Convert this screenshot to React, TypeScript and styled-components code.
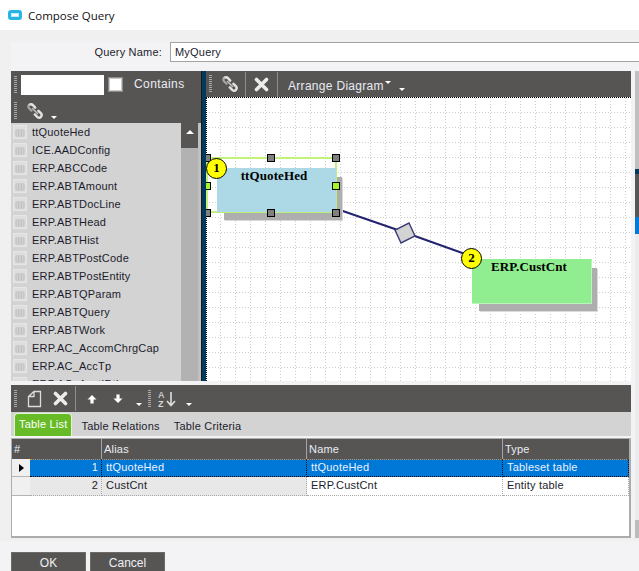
import React from "react";
import styled, { createGlobalStyle } from "styled-components";

const Global = createGlobalStyle`
  html, body { margin: 0; padding: 0; background: #fff; }
  * { box-sizing: border-box; }
`;

const DARK = "#575553";

const Page = styled.div`
  width: 639px;
  height: 571px;
  overflow: hidden;
  display: flex;
  flex-direction: column;
  background: #f0f0f0;
  font-family: "Liberation Sans", Arial, sans-serif;
  font-size: 11px;
  letter-spacing: 0.2px;
  color: #1c1c2c;
`;
const TitleBar = styled.div`
  height: 30px;
  flex: none;
  background: #fff;
  display: flex;
  align-items: center;
  gap: 6px;
  padding-left: 8px;
  font-family: "Open Sans", sans-serif;
  font-size: 11.5px;
  letter-spacing: 0;
  color: #111;
`;
const TitleIcon = styled.span`
  width: 14px;
  height: 10px;
  border-radius: 3px;
  background: #fff;
  border: 3px solid #27b4e6;
  box-shadow: inset 0 0 0 1px #bfe9f7;
`;
const Work = styled.div`
  flex: none;
  height: 499px;
  padding: 12px 0 0 11px;
`;
const NameRow = styled.div`
  height: 29px;
  display: flex;
  background: #f3f3f5;
  justify-content: flex-end;
  align-items: flex-start;
  gap: 8px;
`;
const NameLabel = styled.label`
  line-height: 20px;
`;
const NameInput = styled.div`
  width: 469px;
  height: 20px;
  background: #fff;
  border: 1px solid #a3a3a3;
  border-right: 0;
  padding-left: 4px;
  line-height: 18px;
`;
const Content = styled.div`
  display: flex;
  gap: 4px;
  background: #f3f3f5;
`;
const Column = styled.div`
  width: 620px;
  display: flex;
  flex-direction: column;
  gap: 4px;
`;
const Split = styled.div`
  height: 310px;
  display: flex;
`;
const ListPanel = styled.div`
  width: 190px;
  display: flex;
  flex-direction: column;
  overflow: hidden;
`;
const Bar = styled.div<{ $h: number; $pad?: number }>`
  height: ${(p) => p.$h}px;
  flex: none;
  background: ${DARK};
  display: flex;
  align-items: center;
  padding-left: ${(p) => p.$pad ?? 3}px;
  color: #fff;
`;
const Grip = styled.span<{ $l?: number }>`
  width: 3px;
  height: 18px;
  flex: none;
  margin-left: ${(p) => p.$l ?? 0}px;
  background: repeating-linear-gradient(to bottom, #a9a9a7 0 1px, transparent 1px 2px);
`;
const SearchBox = styled.div`
  width: 83px;
  height: 20px;
  margin-left: 4px;
  background: #fff;
`;
const Check = styled.span`
  width: 13px;
  height: 13px;
  margin-left: 5px;
  background: #fff;
  border: 1px solid #c9c9c9;
  box-shadow: 0 0 0 1px #8d8c8a;
`;
const ContainsLabel = styled.span`
  margin: -1px 0 0 12px;
  color: #e9edf5;
  font-size: 12px;
  letter-spacing: 0.4px;
`;
const Caret = styled.span<{ $x?: number; $y?: number }>`
  width: 0;
  height: 0;
  flex: none;
  margin-left: ${(p) => p.$x ?? 0}px;
  margin-top: ${(p) => p.$y ?? 0}px;
  border: 3px solid transparent;
  border-bottom: 0;
  border-top-color: #fff;
`;
const ListBody = styled.div`
  flex: 1;
  display: flex;
  background: #c0c0c0;
  overflow: hidden;
  padding-right: 2px;
`;
const Items = styled.div`
  width: 170px;
  height: 258px;
  padding: 0 0 0 2px;
  background: #d3d3d3;
  overflow: hidden;
`;
const Item = styled.div`
  height: 18px;
  display: flex;
  align-items: center;
  gap: 5px;
  white-space: nowrap;
`;
const ScrollTrack = styled.div`
  width: 17px;
  background: #b2b2b2;
`;
const ScrollUp = styled.div`
  height: 25px;
  background: ${DARK};
  display: flex;
  justify-content: center;
  padding-top: 7px;
`;
const UpTri = styled.span`
  width: 0;
  height: 0;
  border: 4px solid transparent;
  border-top: 0;
  border-bottom: 4px solid #fff;
`;
const Splitter = styled.div`
  width: 5px;
  flex: none;
  background: #003a5c;
  border-left: 1px solid #1a1a1a;
`;
const Diagram = styled.div`
  flex: 1;
  display: flex;
  flex-direction: column;
  min-width: 0;
`;
const DiagramBar = styled(Bar)`
  border-bottom: 1px dotted #000;
  background-clip: padding-box;
`;
const Sep = styled.span<{ $l: number; $r: number }>`
  width: 1px;
  height: 25px;
  flex: none;
  margin-left: ${(p) => p.$l}px;
  margin-right: ${(p) => p.$r}px;
  background: #8f8e8c;
`;
const BarIcon = styled.svg<{ $l?: number }>`
  flex: none;
  display: block;
  margin-left: ${(p) => p.$l ?? 0}px;
`;
const MenuLabel = styled.span`
  margin: 3px 0 0 10px;
  color: #e6ebf5;
  font-size: 12px;
  letter-spacing: 0.3px;
`;
const Canvas = styled.div`
  flex: 1;
  position: relative;
  background: #fff;
  overflow: hidden;
`;
const CanvasArt = styled.svg`
  position: absolute;
  inset: 0;
  width: 100%;
  height: 100%;
`;
const Selection = styled.div`
  position: absolute;
  left: 0;
  top: 59px;
  width: 131px;
  height: 56px;
  border: 2px solid #c3f27a;
`;
const Node = styled.div<{ $x: number; $y: number; $bg: string; $edge: string }>`
  position: absolute;
  left: ${(p) => p.$x}px;
  top: ${(p) => p.$y}px;
  width: 120px;
  height: 45px;
  padding: 0 6px 0 0;
  background: ${(p) => p.$bg};
  border: 1px solid ${(p) => p.$edge};
  border-left-color: ${(p) => p.$bg};
  border-top-color: ${(p) => p.$bg};
  box-shadow: 6px 8px 0 -1px #aeaeae, 7px 9px 0 -1px #dadada;
  font-family: "Liberation Serif", "Times New Roman", serif;
  font-weight: bold;
  font-size: 13px;
  letter-spacing: 0.1px;
  line-height: 14px;
  text-align: center;
  color: #000;
`;
const Badge = styled.div<{ $x: number; $y: number }>`
  position: absolute;
  left: ${(p) => p.$x}px;
  top: ${(p) => p.$y}px;
  width: 21px;
  height: 21px;
  border-radius: 50%;
  background: #ffff00;
  border: 1px solid #000;
  font-family: "Liberation Serif", serif;
  font-weight: bold;
  font-size: 13px;
  letter-spacing: 0;
  line-height: 17px;
  text-align: center;
  color: #000;
`;
const Handle = styled.span<{ $x: number; $y: number; $on?: boolean }>`
  position: absolute;
  left: ${(p) => p.$x}px;
  top: ${(p) => p.$y}px;
  width: 8px;
  height: 8px;
  background: ${(p) => (p.$on ? "#a4f52a" : "#808080")};
  border: 1px solid #000;
`;
const Bottom = styled.div`
  height: 153px;
  display: flex;
  flex-direction: column;
`;
const Tabs = styled.div`
  height: 24px;
  flex: none;
  background: #d3d3d3;
  display: flex;
  padding-left: 3px;
  align-items: flex-end;
`;
const Tab = styled.div<{ $active?: boolean }>`
  height: ${(p) => (p.$active ? 23 : 22)}px;
  padding: ${(p) => (p.$active ? "0 4px" : "0 7px")};
  margin-right: ${(p) => (p.$active ? 2 : 0)}px;
  line-height: ${(p) => (p.$active ? 20 : 24)}px;
  background: ${(p) => (p.$active ? "#66bb27" : "transparent")};
  color: ${(p) => (p.$active ? "#fff" : "#1c1c2c")};
  border-radius: 4px 4px 0 0;
  border: ${(p) => (p.$active ? "1px solid #e4f5d4" : "0")};
  border-bottom: 0;
`;
const GridBox = styled.div`
  margin-top: 2px;
  height: 100px;
  background: #fff;
  border: 1px solid #acacac;
  border-width: 1px 2px 2px 1px;
`;
const HeadRow = styled.div`
  height: 20px;
  display: grid;
  grid-template-columns: 90px 205px 196px 126px;
  background: ${DARK};
  color: #e9edf5;
`;
const HeadCell = styled.div`
  padding-left: 2px;
  line-height: 20px;
  border-right: 1px solid #a5a5a5;
  &:last-child { border-right: 0; }
`;
const Row = styled.div<{ $sel?: boolean }>`
  height: ${(p) => (p.$sel ? 18 : 19)}px;
  display: grid;
  grid-template-columns: 18px 72px 205px 196px 126px;
  color: ${(p) => (p.$sel ? "#eaf2ff" : "#1c1c2c")};
`;
const Indicator = styled.div`
  background: #f0f0f0;
  border-bottom: 1px solid #b5b5b5;
  display: flex;
  align-items: center;
  padding-left: 7px;
`;
const RightTri = styled.span`
  width: 0;
  height: 0;
  border: 4px solid transparent;
  border-right: 0;
  border-left: 5px solid #000;
`;
const Cell = styled.div<{ $sel?: boolean; $alt?: boolean; $num?: boolean }>`
  padding: ${(p) => (p.$num ? "0 3px 0 0" : "0 0 0 4px")};
  text-align: ${(p) => (p.$num ? "right" : "left")};
  line-height: ${(p) => (p.$sel ? 14 : 17)}px;
  background: ${(p) => (p.$sel ? "#0078d7" : p.$alt ? "#e8e8e8" : "#fff")};
  border-right: 1px dotted ${(p) => (p.$sel ? "#0a0a0a" : "#a9a9a9")};
  border-bottom: 1px dotted ${(p) => (p.$sel ? "#000" : "#a9a9a9")};
  border-top: ${(p) => (p.$sel ? "1px dotted #e8821e" : "0")};
`;
const Strip = styled.div`
  width: 4px;
  flex: none;
  height: 467px;
  display: flex;
  flex-direction: column;
`;
const StripPart = styled.div<{ $h: number; $bg: string }>`
  height: ${(p) => p.$h}px;
  flex: none;
  background: ${(p) => p.$bg};
`;
const Footer = styled.div`
  margin: 3px 0 0 -11px;
  height: 30px;
  padding: 11px 0 0 11px;
  background: #f3f3f5;
  display: flex;
  gap: 4px;
`;
const Btn = styled.div`
  width: 75px;
  height: 30px;
  background: ${DARK};
  border: 1px solid #6d6b69;
  color: #eef0f5;
  font-size: 12px;
  letter-spacing: 0;
  text-align: center;
  line-height: 20px;
`;

const Link = ({ l }: { l?: number }) => (
  <BarIcon $l={l} width="18" height="18" viewBox="0 0 18 18" fill="none">
    <path d="M3 3.2c1.5-1.4 3-1 4 0l2.2 2.4" stroke="#e4e4e4" strokeWidth="2.4" strokeLinecap="round" />
    <path d="M8.8 12.4l2.4 2.4c1.2 1 2.6 1.2 3.8 0 1-1.3.8-2.6-.2-3.6l-2.4-2.4" stroke="#e4e4e4" strokeWidth="2.4" strokeLinecap="round" />
    <path d="M3 3.2c-1 1.2-.8 2.4.2 3.4l2.4 2.2" stroke="#a8a8a8" strokeWidth="2" strokeLinecap="round" />
    <path d="M6.5 6.5l5 5" stroke="#bdbdbd" strokeWidth="1.6" strokeLinecap="round" />
  </BarIcon>
);
const Cross = ({ l }: { l?: number }) => (
  <BarIcon $l={l} width="15" height="15" viewBox="0 0 15 15">
    <path d="M2.5 2.5l10 10M12.5 2.5l-10 10" stroke="#ececec" strokeWidth="3.6" strokeLinecap="round" />
  </BarIcon>
);
const TableIcon = () => (
  <svg width="14" height="14" viewBox="0 0 14 14" style={{ flex: "none", display: "block" }}>
    <rect x="0.5" y="0.5" width="13" height="13" fill="#dedede" stroke="#e6e6e6" />
    <path d="M3 5h8v6H3zM3 7h8M3 9h8M5.6 5v6M8.3 5v6" fill="#e8e8e8" stroke="#bdbdbd" strokeWidth="1" />
  </svg>
);

const tables = [
  "ttQuoteHed", "ICE.AADConfig", "ERP.ABCCode", "ERP.ABTAmount", "ERP.ABTDocLine", "ERP.ABTHead",
  "ERP.ABTHist", "ERP.ABTPostCode", "ERP.ABTPostEntity", "ERP.ABTQParam", "ERP.ABTQuery", "ERP.ABTWork",
  "ERP.AC_AccomChrgCap", "ERP.AC_AccTp", "ERP.AC_AcctIDtl",
];

const handles: { x: number; y: number; on?: boolean }[] = [
  { x: -3, y: 56 }, { x: 61, y: 56 }, { x: 126, y: 56 },
  { x: -3, y: 84, on: true }, { x: 126, y: 84, on: true },
  { x: -3, y: 111 }, { x: 61, y: 111 }, { x: 126, y: 111 },
];

export default function App() {
  return (
    <Page>
      <Global />
      <TitleBar>
        <TitleIcon />
        Compose Query
      </TitleBar>
      <Work>
        <NameRow>
          <NameLabel>Query Name:</NameLabel>
          <NameInput>MyQuery</NameInput>
        </NameRow>
        <Content>
          <Column>
            <Split>
              <ListPanel>
                <Bar $h={27}>
                  <Grip />
                  <SearchBox />
                  <Check />
                  <ContainsLabel>Contains</ContainsLabel>
                </Bar>
                <Bar $h={25}>
                  <Grip />
                  <Link l={9} />
                  <Caret $x={7} $y={14} />
                </Bar>
                <ListBody>
                  <Items>
                    {tables.map((t) => (
                      <Item key={t}>
                        <TableIcon />
                        {t}
                      </Item>
                    ))}
                  </Items>
                  <ScrollTrack>
                    <ScrollUp>
                      <UpTri />
                    </ScrollUp>
                  </ScrollTrack>
                </ListBody>
              </ListPanel>
              <Splitter />
              <Diagram>
                <DiagramBar $h={27}>
                  <Grip />
                  <Link l={9} />
                  <Sep $l={6} $r={8} />
                  <Cross />
                  <Sep $l={8} $r={0} />
                  <MenuLabel>Arrange Diagram</MenuLabel>
                  <Caret $x={1} $y={-3} />
                  <Caret $x={8} $y={11} />
                </DiagramBar>
                <Canvas>
                  <CanvasArt>
                    <defs>
                      <pattern id="dots" width="15" height="15" patternUnits="userSpaceOnUse">
                        <path d="M14.5 0V15M0 14.5H15" stroke="#cdcdcd" strokeDasharray="1 2" fill="none" />
                      </pattern>
                    </defs>
                    <rect width="100%" height="100%" fill="url(#dots)" />
                    <path d="M0.5 0V283" stroke="#000" strokeDasharray="1 1" />
                    <path d="M131 111L199 134.5L266 158.5" stroke="#22226e" strokeWidth="2" fill="none" />
                    <path d="M203 125L209 138L195 145L189 132Z" fill="#d3d3d3" stroke="#3b3b78" strokeWidth="1.4" />
                  </CanvasArt>
                  <Selection />
                  <Node $x={11} $y={70} $bg="#add8e6" $edge="#b9f07c">ttQuoteHed</Node>
                  <Node $x={266} $y={161} $bg="#90ee90" $edge="#b8f7b8">ERP.CustCnt</Node>
                  {handles.map((h, i) => (
                    <Handle key={i} $x={h.x} $y={h.y} $on={h.on} />
                  ))}
                  <Badge $x={0} $y={60}>1</Badge>
                  <Badge $x={255} $y={150}>2</Badge>
                </Canvas>
              </Diagram>
            </Split>
            <Bottom>
              <Bar $h={27}>
                <Grip />
                <BarIcon $l={10} width="15" height="18" viewBox="0 0 15 18" fill="none">
                  <path d="M1.5 6.5L7 1.5H13.5V16.5H1.5Z M7 1.5V6.5H1.5" stroke="#dcdcdc" strokeWidth="1.3" />
                </BarIcon>
                <Cross l={11} />
                <Sep $l={7} $r={0} />
                <BarIcon $l={11} width="10" height="10" viewBox="0 0 10 10">
                  <path d="M5 1L9.5 5.5H6.6V9.5H3.4V5.5H.5Z" fill="#fff" />
                </BarIcon>
                <BarIcon $l={16} width="10" height="10" viewBox="0 0 10 10">
                  <path d="M5 9L9.5 4.5H6.6V.5H3.4V4.5H.5Z" fill="#fff" />
                </BarIcon>
                <Caret $x={13} $y={12} />
                <Grip $l={6} />
                <BarIcon $l={7} width="20" height="18" viewBox="0 0 20 18">
                  <text x="0" y="8" fontFamily="Liberation Sans" fontWeight="bold" fontSize="9" fill="#c4c4c4">A</text>
                  <text x="0" y="17" fontFamily="Liberation Sans" fontWeight="bold" fontSize="9" fill="#d8d8d8">Z</text>
                  <path d="M13 2V15M9 11L13 15.5L17 11" stroke="#dedede" strokeWidth="1.6" fill="none" />
                </BarIcon>
                <Caret $x={8} $y={12} />
              </Bar>
              <Tabs>
                <Tab $active>Table List</Tab>
                <Tab>Table Relations</Tab>
                <Tab>Table Criteria</Tab>
              </Tabs>
              <GridBox>
                <HeadRow>
                  <HeadCell>#</HeadCell>
                  <HeadCell>Alias</HeadCell>
                  <HeadCell>Name</HeadCell>
                  <HeadCell>Type</HeadCell>
                </HeadRow>
                <Row $sel>
                  <Indicator><RightTri /></Indicator>
                  <Cell $sel $num>1</Cell>
                  <Cell $sel>ttQuoteHed</Cell>
                  <Cell $sel>ttQuoteHed</Cell>
                  <Cell $sel>Tableset table</Cell>
                </Row>
                <Row>
                  <Indicator />
                  <Cell $alt $num>2</Cell>
                  <Cell $alt>CustCnt</Cell>
                  <Cell>ERP.CustCnt</Cell>
                  <Cell>Entity table</Cell>
                </Row>
              </GridBox>
            </Bottom>
          </Column>
          <Strip>
            <StripPart $h={98} $bg="#c0c0c0" />
            <StripPart $h={5} $bg="#003a5c" />
            <StripPart $h={43} $bg={DARK} />
            <StripPart $h={17} $bg="#0078d7" />
            <StripPart $h={286} $bg="#ececec" />
            <StripPart $h={18} $bg="#bcbcbc" />
          </Strip>
        </Content>
        <Footer>
          <Btn>OK</Btn>
          <Btn>Cancel</Btn>
        </Footer>
      </Work>
    </Page>
  );
}
